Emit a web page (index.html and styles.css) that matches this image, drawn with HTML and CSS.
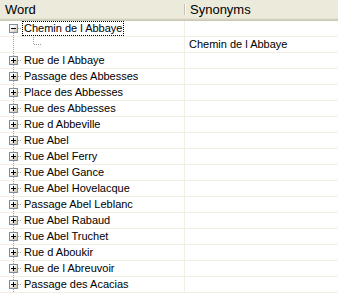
FILE: index.html
```html
<!DOCTYPE html>
<html lang="en">

<head>
    <meta charset="UTF-8">
    <title>Word Synonyms</title>
    <link rel="stylesheet" href="styles.css">
</head>

<body>
    <div class="tree-list">
        <div class="head">
            <div class="head-cell head-word">Word</div>
            <div class="head-cell head-syn">Synonyms</div>
        </div>

        <!-- expanded node -->
        <div class="row">
            <div class="cell-word">
                <span class="gutter gutter-first"><span class="toggle open"></span></span>
                <span class="label focused">Chemin de l Abbaye</span>
            </div>
            <div class="cell-syn"></div>
        </div>
        <div class="row">
            <div class="cell-word">
                <span class="gutter gutter-pass"></span>
                <span class="branch"></span>
            </div>
            <div class="cell-syn">Chemin de l Abbaye</div>
        </div>

        <!-- collapsed nodes -->
        <div class="row">
            <div class="cell-word"><span class="gutter"><span class="toggle"></span></span><span class="label">Rue de l Abbaye</span></div>
            <div class="cell-syn"></div>
        </div>
        <div class="row">
            <div class="cell-word"><span class="gutter"><span class="toggle"></span></span><span class="label">Passage des Abbesses</span></div>
            <div class="cell-syn"></div>
        </div>
        <div class="row">
            <div class="cell-word"><span class="gutter"><span class="toggle"></span></span><span class="label">Place des Abbesses</span></div>
            <div class="cell-syn"></div>
        </div>
        <div class="row">
            <div class="cell-word"><span class="gutter"><span class="toggle"></span></span><span class="label">Rue des Abbesses</span></div>
            <div class="cell-syn"></div>
        </div>
        <div class="row">
            <div class="cell-word"><span class="gutter"><span class="toggle"></span></span><span class="label">Rue d Abbeville</span></div>
            <div class="cell-syn"></div>
        </div>
        <div class="row">
            <div class="cell-word"><span class="gutter"><span class="toggle"></span></span><span class="label">Rue Abel</span></div>
            <div class="cell-syn"></div>
        </div>
        <div class="row">
            <div class="cell-word"><span class="gutter"><span class="toggle"></span></span><span class="label">Rue Abel Ferry</span></div>
            <div class="cell-syn"></div>
        </div>
        <div class="row">
            <div class="cell-word"><span class="gutter"><span class="toggle"></span></span><span class="label">Rue Abel Gance</span></div>
            <div class="cell-syn"></div>
        </div>
        <div class="row">
            <div class="cell-word"><span class="gutter"><span class="toggle"></span></span><span class="label">Rue Abel Hovelacque</span></div>
            <div class="cell-syn"></div>
        </div>
        <div class="row">
            <div class="cell-word"><span class="gutter"><span class="toggle"></span></span><span class="label">Passage Abel Leblanc</span></div>
            <div class="cell-syn"></div>
        </div>
        <div class="row">
            <div class="cell-word"><span class="gutter"><span class="toggle"></span></span><span class="label">Rue Abel Rabaud</span></div>
            <div class="cell-syn"></div>
        </div>
        <div class="row">
            <div class="cell-word"><span class="gutter"><span class="toggle"></span></span><span class="label">Rue Abel Truchet</span></div>
            <div class="cell-syn"></div>
        </div>
        <div class="row">
            <div class="cell-word"><span class="gutter"><span class="toggle"></span></span><span class="label">Rue d Aboukir</span></div>
            <div class="cell-syn"></div>
        </div>
        <div class="row">
            <div class="cell-word"><span class="gutter"><span class="toggle"></span></span><span class="label">Rue de l Abreuvoir</span></div>
            <div class="cell-syn"></div>
        </div>
        <div class="row">
            <div class="cell-word"><span class="gutter"><span class="toggle"></span></span><span class="label">Passage des Acacias</span></div>
            <div class="cell-syn"></div>
        </div>
    </div>
</body>

</html>
```

FILE: styles.css
```css
body,
html {
    margin: 0;
    padding: 0;
    background-color: #fff;
    font-family: 'Liberation Sans', Arial, sans-serif;
    font-size: 11px;
    color: #000;
}

.tree-list {
    width: 338px;
    overflow: hidden;
}

/* column header, XP style */
.head {
    display: grid;
    grid-template-columns: 185px 1fr;
    height: 21px;
    background: linear-gradient(to bottom, #ebeadb 0 18px, #e2dfcc 18px 19px, #d6d2c0 19px 20px, #cbc7b8 20px 21px);
}

.head-cell {
    height: 18px;
    line-height: 18px;
    padding-top: 1px;
    box-sizing: border-box;
    font-size: 13px;
    white-space: nowrap;
}

.head-word {
    padding-left: 5px;
    background: linear-gradient(#c5c2b2, #c5c2b2) no-repeat right 0 top 4px / 1px 11px;
}

.head-syn {
    padding-left: 5px;
    background: linear-gradient(#fff, #fff) no-repeat left 0 top 4px / 1px 11px;
}

.row {
    display: grid;
    grid-template-columns: 185px 1fr;
    height: 15px;
    border-bottom: 1px solid #f1efe2;
}

.cell-word {
    display: flex;
    align-items: center;
    border-right: 1px solid #f1efe2;
    white-space: nowrap;
    overflow: hidden;
}

.cell-syn {
    padding-left: 4px;
    line-height: 15px;
    white-space: nowrap;
}

/* tree connectors */
.gutter {
    flex: none;
    width: 22px;
    height: 15px;
    display: flex;
    align-items: center;
    background:
        repeating-linear-gradient(to right, #a0a0a0 0 1px, transparent 1px 2px) no-repeat 18px 7px / 4px 1px,
        repeating-linear-gradient(to bottom, #a0a0a0 0 1px, transparent 1px 2px) no-repeat 13px 0 / 1px 15px;
}

.gutter-first {
    background:
        repeating-linear-gradient(to right, #a0a0a0 0 1px, transparent 1px 2px) no-repeat 18px 7px / 4px 1px,
        repeating-linear-gradient(to bottom, #a0a0a0 0 1px, transparent 1px 2px) no-repeat 13px 12px / 1px 3px;
}

.gutter-pass {
    background: repeating-linear-gradient(to bottom, #a0a0a0 0 1px, transparent 1px 2px) no-repeat 13px 0 / 1px 15px;
}

.branch {
    flex: none;
    width: 22px;
    height: 15px;
    background:
        repeating-linear-gradient(to right, #a0a0a0 0 1px, transparent 1px 2px) no-repeat 12px 7px / 8px 1px,
        repeating-linear-gradient(to bottom, #a0a0a0 0 1px, transparent 1px 2px) no-repeat 11px 0 / 1px 8px;
}

.toggle {
    width: 9px;
    height: 9px;
    margin-left: 9px;
    box-sizing: border-box;
    border: 1px solid #7f8e9c;
    background:
        linear-gradient(#000, #000) no-repeat center / 5px 1px,
        linear-gradient(#000, #000) no-repeat center / 1px 5px,
        linear-gradient(135deg, #fff 25%, #c2beae);
}

.toggle.open {
    background:
        linear-gradient(#000, #000) no-repeat center / 5px 1px,
        linear-gradient(135deg, #fff 25%, #c2beae);
}

.label {
    padding: 0 2px;
    height: 15px;
    line-height: 15px;
    box-sizing: border-box;
}

.label.focused {
    border: 1px dotted #000;
    line-height: 13px;
    padding: 0 1px;
}
```
